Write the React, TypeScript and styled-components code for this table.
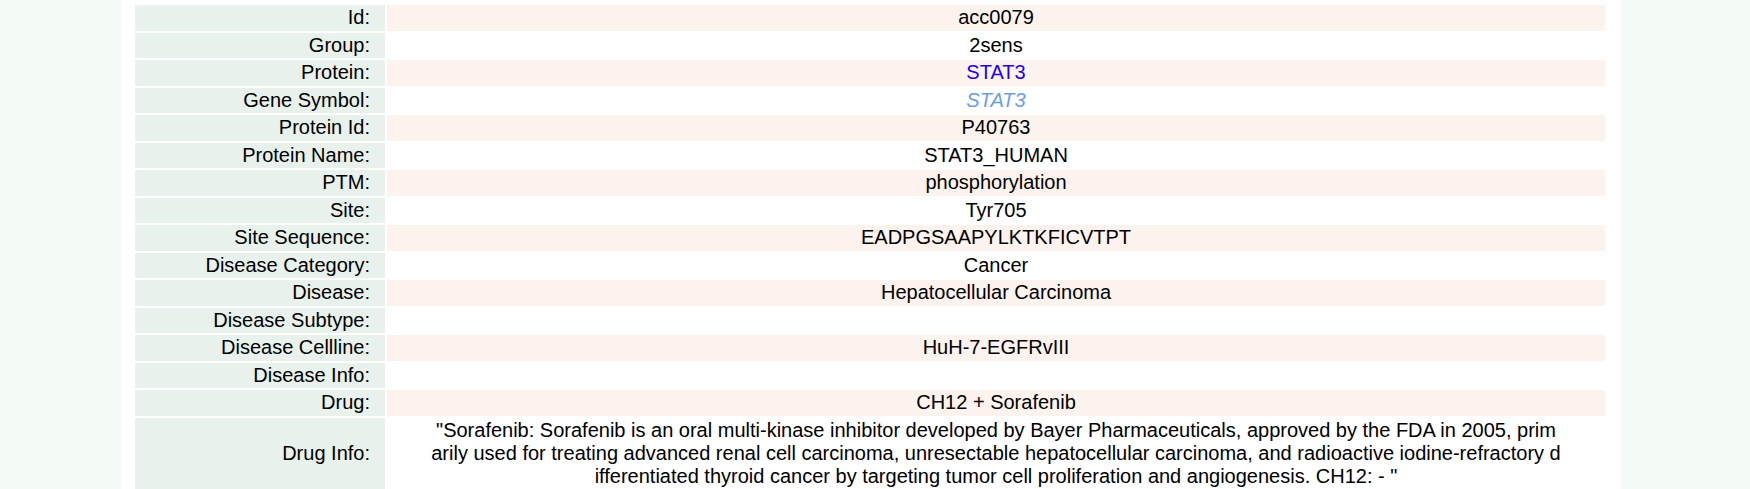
import React from "react";
import styled, { createGlobalStyle } from "styled-components";

const Global = createGlobalStyle`
  html, body { margin: 0; padding: 0; }
  body {
    background: #f4faf6;
    font-family: "Liberation Sans", Arial, sans-serif;
    color: #000;
    overflow: hidden;
  }
`;

const Page = styled.div`
  width: 1500px;
  margin-left: 121px;
  background: #ffffff;
  min-height: 489px;
  padding: 5px 16px 0 14px;
  box-sizing: border-box;
`;

const Table = styled.div`
  display: grid;
  grid-template-columns: 250px 1fr;
  column-gap: 2px;
  row-gap: 2px;
  font-size: 20px;
  line-height: 23px;
`;

const Label = styled.div`
  background: #e8f1ec;
  text-align: right;
  padding: 1.25px 15px 1.25px 0;
  display: flex;
  align-items: center;
  justify-content: flex-end;
  white-space: nowrap;
`;

const Value = styled.div<{ $shade: boolean }>`
  background: ${(p) => (p.$shade ? "#fdf3ee" : "#ffffff")};
  text-align: center;
  padding: 1.25px 0;
  min-height: 23px;
`;

const Link = styled.span`
  color: #2200ee;
`;

const Gene = styled.span`
  color: #6b9ee2;
  font-style: italic;
`;

const Info = styled.div`
  width: 1131px;
  margin: 0 auto;
  word-break: break-all;
`;

type Row = { label: string; value: React.ReactNode };

const info =
  '"Sorafenib: Sorafenib is an oral multi-kinase inhibitor developed by Bayer Pharmaceuticals, approved by the FDA in 2005, primarily used for treating advanced renal cell carcinoma, unresectable hepatocellular carcinoma, and radioactive iodine-refractory differentiated thyroid cancer by targeting tumor cell proliferation and angiogenesis. CH12: - "';

const rows: Row[] = [
  { label: "Id:", value: "acc0079" },
  { label: "Group:", value: "2sens" },
  { label: "Protein:", value: <Link>STAT3</Link> },
  { label: "Gene Symbol:", value: <Gene>STAT3</Gene> },
  { label: "Protein Id:", value: "P40763" },
  { label: "Protein Name:", value: "STAT3_HUMAN" },
  { label: "PTM:", value: "phosphorylation" },
  { label: "Site:", value: "Tyr705" },
  { label: "Site Sequence:", value: "EADPGSAAPYLKTKFICVTPT" },
  { label: "Disease Category:", value: "Cancer" },
  { label: "Disease:", value: "Hepatocellular Carcinoma" },
  { label: "Disease Subtype:", value: "" },
  { label: "Disease Cellline:", value: "HuH-7-EGFRvIII" },
  { label: "Disease Info:", value: "" },
  { label: "Drug:", value: "CH12 + Sorafenib" },
  { label: "Drug Info:", value: <Info>{info}</Info> },
];

export default function App() {
  return (
    <>
      <Global />
      <Page>
        <Table>
          {rows.map((r, i) => (
            <React.Fragment key={r.label}>
              <Label>{r.label}</Label>
              <Value $shade={i % 2 === 0}>{r.value}</Value>
            </React.Fragment>
          ))}
        </Table>
      </Page>
    </>
  );
}
